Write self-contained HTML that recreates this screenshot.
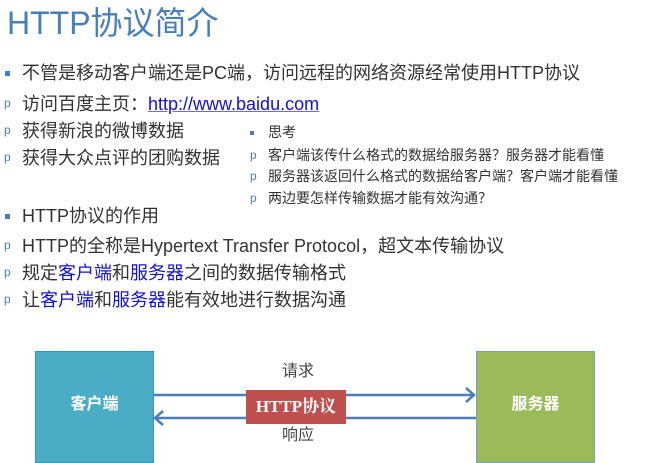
<!DOCTYPE html>
<html><head><meta charset="utf-8"><style>
body{margin:0;width:664px;height:458px;background:#fff;position:relative;overflow:hidden;font-family:"Liberation Sans","Noto Sans CJK SC",sans-serif;color:#333}
.a{position:absolute;white-space:nowrap;line-height:1}
.t{left:7px;top:7px;font-size:32px;color:#4a7ebb}
.m{font-size:18px;left:22px}
.b{position:absolute;font-size:12px;color:#4a7ebb;left:4px}
.sq{position:absolute;width:5px;height:5px;background:#4a7ebb}
.s{font-size:14px;left:268px;color:#333}
.bl{color:#1010e0}
</style></head><body>
<div class="a t">HTTP协议简介</div>

<div class="sq" style="left:5px;top:71px"></div>
<div class="a m" style="top:64px">不管是移动客户端还是PC端，访问远程的网络资源经常使用HTTP协议</div>
<div class="a b" style="top:97px">p</div>
<div class="a m" style="top:95px">访问百度主页：<span style="color:#1010e0;text-decoration:underline;text-decoration-color:#6a6aff">http://www.baidu.com</span></div>
<div class="a b" style="top:124px">p</div>
<div class="a m" style="top:122px">获得新浪的微博数据</div>
<div class="a b" style="top:151px">p</div>
<div class="a m" style="top:149px">获得大众点评的团购数据</div>

<div class="sq" style="left:250px;top:131px;width:4px;height:4px"></div>
<div class="a s" style="top:125px">思考</div>
<div class="a b" style="left:250px;top:149px">p</div>
<div class="a s" style="top:148px">客户端该传什么格式的数据给服务器？服务器才能看懂</div>
<div class="a b" style="left:250px;top:170px">p</div>
<div class="a s" style="top:169px">服务器该返回什么格式的数据给客户端？客户端才能看懂</div>
<div class="a b" style="left:250px;top:192px">p</div>
<div class="a s" style="top:191px">两边要怎样传输数据才能有效沟通？</div>

<div class="sq" style="left:5px;top:214px"></div>
<div class="a m" style="top:207px">HTTP协议的作用</div>
<div class="a b" style="top:239px">p</div>
<div class="a m" style="top:237px">HTTP的全称是Hypertext Transfer Protocol，超文本传输协议</div>
<div class="a b" style="top:266px">p</div>
<div class="a m" style="top:264px">规定<span class="bl">客户端</span>和<span class="bl">服务器</span>之间的数据传输格式</div>
<div class="a b" style="top:293px">p</div>
<div class="a m" style="top:291px">让<span class="bl">客户端</span>和<span class="bl">服务器</span>能有效地进行数据沟通</div>

<div style="position:absolute;left:35px;top:351px;width:117px;height:110px;background:#4bacc6;border:1px solid #3f8fb0"></div>
<div class="a" style="left:35px;top:397px;width:119px;text-align:center;color:#fff;font-size:16px;font-weight:bold">客户端</div>
<div style="position:absolute;left:476px;top:351px;width:117px;height:110px;background:#9bbb59;border:1px solid #7f9bc8"></div>
<div class="a" style="left:476px;top:397px;width:119px;text-align:center;color:#fff;font-size:16px;font-weight:bold">服务器</div>
<svg style="position:absolute;left:0;top:0" width="664" height="458">
<line x1="153" y1="395" x2="474" y2="395" stroke="#4a7ebb" stroke-width="2.5"/>
<polyline points="466,388 474,395 466,402" fill="none" stroke="#4a7ebb" stroke-width="2.5"/>
<line x1="155" y1="418" x2="476" y2="418" stroke="#4a7ebb" stroke-width="2.5"/>
<polyline points="163,411 155,418 163,425" fill="none" stroke="#4a7ebb" stroke-width="2.5"/>
</svg>
<div style="position:absolute;left:246px;top:390px;width:100px;height:34px;background:#c0504d"></div>
<div class="a" style="left:246px;top:398px;width:100px;text-align:center;color:#fff;font-size:17px;font-weight:bold;font-family:'Liberation Serif','Noto Serif CJK SC',serif">HTTP协议</div>
<div class="a" style="left:282px;top:364px;font-size:16px;color:#444">请求</div>
<div class="a" style="left:282px;top:428px;font-size:16px;color:#444">响应</div>
</body></html>
